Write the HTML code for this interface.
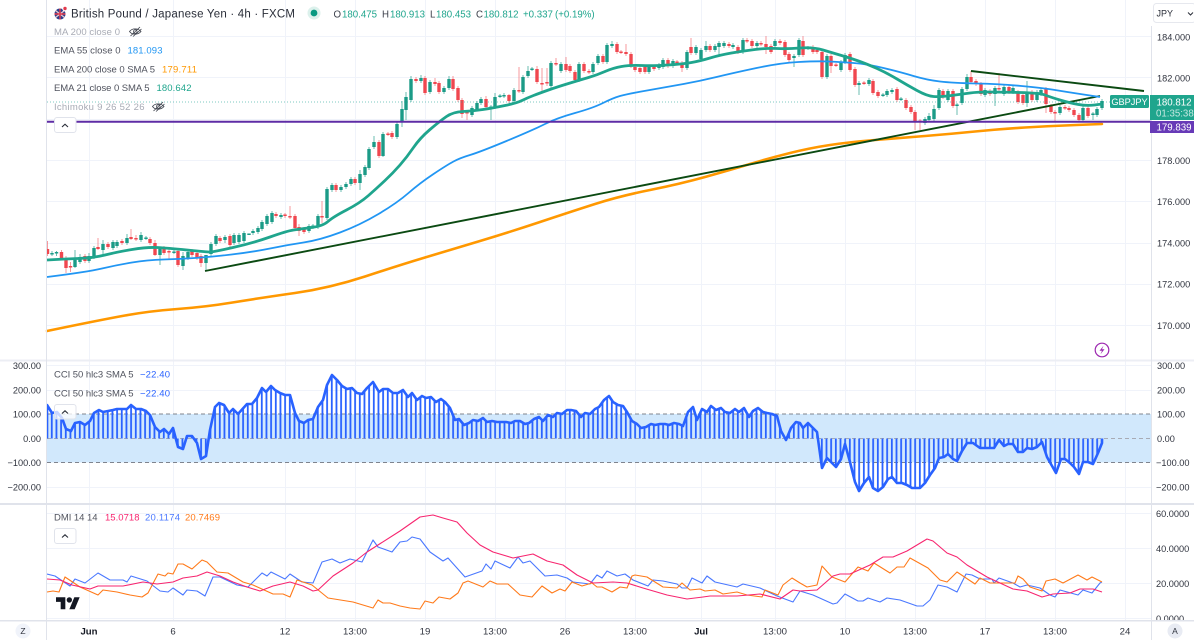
<!DOCTYPE html>
<html><head><meta charset="utf-8"><title>GBPJPY</title>
<style>
html,body{margin:0;padding:0;background:#fff;width:1194px;height:640px;overflow:hidden}
svg{display:block;filter:blur(.3px)}
text{font-family:"Liberation Sans",sans-serif}
.ax{font-size:9.2px;fill:#30343f}
.lg{font-size:9.5px;fill:#50535e}
.ft{font-size:9.5px;fill:#a8abb5}
.tm{font-size:9.6px;fill:#30343f;text-anchor:middle}
.v{font-size:9.7px;fill:#1fa58d}
.o{font-size:9.7px;fill:#3a3e49}
</style></head><body>
<svg width="1194" height="640" viewBox="0 0 1194 640" xmlns="http://www.w3.org/2000/svg">
<defs>
<pattern id="h" x="46.2" y="0" width="4.667" height="20" patternUnits="userSpaceOnUse"><rect width="1.8" height="20" fill="#2962ff"/></pattern>
<clipPath id="pl"><rect x="47" y="0" width="1104" height="620"/></clipPath>
</defs>
<rect width="1194" height="640" fill="#fff"/>
<!-- grid -->
<path stroke="#f0f3fa" fill="none" d="M89.5 0V620M173.5 0V620M285.5 0V620M355.5 0V620M425.5 0V620M495.5 0V620M565.5 0V620M635.5 0V620M701.5 0V620M775.5 0V620M845.5 0V620M915.5 0V620M985.5 0V620M1055.5 0V620M1125.5 0V620"/>
<path stroke="#f0f3fa" fill="none" d="M47 36.5H1151M47 77.5H1151M47 119.5H1151M47 160.5H1151M47 201.5H1151M47 243.5H1151M47 284.5H1151M47 325.5H1151M47 365.5H1151M47 390.5H1151M47 487.5H1151M47 513.5H1151M47 548.5H1151M47 583.5H1151M47 618.5H1151"/>
<!-- CCI band -->
<rect x="47" y="414" width="1104" height="48.5" fill="#d1e8fc"/>
<path stroke="#80848e" stroke-dasharray="4 3" fill="none" d="M47 414H1151M47 462.5H1151"/>
<path stroke="#a8abb5" stroke-dasharray="4 3" fill="none" d="M47 438.5H1151"/>
<!-- Candle wicks -->
<g clip-path="url(#pl)" fill="none">
<path stroke="#1b9b87" stroke-width="1" opacity=".65" d="M52 251V256M56.5 251V256M75 250V268M80 254V264M89 253V263M94 246V259M103 240V254M113 240V250M117 240V248M127 234V245M141 232V242M146 236V240M160 249V265M174 250V254M183 252V270M188 250V260M206 255V270M211 242V256M216 234V246M225 235V243M234 233V245M239 233V244M244 231V243M253 229V235M258 226V234M262 220V231M267 214V226M272 211V224M281 213V219M309 224V233M313 224V229M318 214V229M327 187V220M332 183V192M341 185V192M346 182V189M351 177V186M360 170V190M365 165V177M369 147V170M374 136V149M383 132V157M397 122V139M402 101V127M406 92V120M411 76V102M421 75V83M430 80V94M444 86V94M449 76V90M472 106V117M477 101V111M481 97V105M491 105V120M495 93V109M500 94V98M504 93V98M514 88V103M523 75V94M528 66V78M532 67V71M551 61V88M561 62V73M579 62V82M593 62V74M598 54V65M607 43V64M612 41V48M649 65V74M659 63V70M663 58V69M673 59V68M687 50V70M696 45V55M701 48V61M706 41V52M715 44V52M719 41V55M724 41V48M733 43V49M743 38V54M757 41V48M775 39V48M794 54V67M799 38V57M808 46V50M827 54V79M841 60V72M845 53V64M859 81V95M869 78V86M883 93V97M887 89V97M892 88V94M901 97V101M925 117V125M929 113V122M934 105V121M939 88V110M948 89V102M957 103V115M962 87V105M967 74V91M985 88V97M995 86V106M1004 85V96M1013 86V94M1027 81V107M1037 90V102M1041 88V96M1060 105V115M1083 106V122M1093 112V120M1097 107V117M1102 99V110"/>
<path stroke="#f0474f" stroke-width="1" opacity=".55" d="M47.5 241V256M61.5 250V260M66 256V273M70.5 262V272M85 254V263M98 238V250M108 242V249M122 239V245M131 229V240M136 235V241M150 237V245M155 240V256M164 246V255M169 249V259M178 249V267M192 249V257M197 251V260M201 254V267M220 236V243M230 234V247M276 212V218M285 213V218M290 206V219M295 214V230M299 224V236M304 227V234M322 201V223M336 183V192M355 177V185M379 140V158M388 132V136M392 131V139M416 77V83M425 76V95M435 78V86M439 81V94M453 76V91M458 86V102M462 98V118M467 110V120M486 96V109M509 94V103M519 67V93M537 66V84M542 68V93M547 68V86M556 58V66M566 57V72M570 64V73M575 70V83M584 62V73M589 69V74M603 54V64M617 42V54M621 50V54M626 44V56M631 52V68M635 65V72M640 66V74M645 65V74M654 65V71M668 58V68M677 60V64M682 61V72M691 38V55M710 44V52M729 42V48M738 45V54M747 38V43M752 39V48M761 41V46M766 36V54M771 44V54M780 39V45M785 40V57M789 52V62M803 36V57M813 45V54M817 48V54M822 50V79M831 54V73M836 63V67M850 52V72M855 67V87M864 81V85M873 79V95M878 90V98M897 87V102M906 98V110M911 105V114M915 110V130M920 119V130M943 89V99M953 89V108M971 71V84M976 79V86M981 82V96M990 89V96M999 73V91M1009 85V94M1018 90V104M1023 93V105M1032 90V102M1046 87V113M1051 104V114M1055 110V121M1065 105V110M1069 106V112M1074 108V117M1079 113V122M1088 106V118"/>
<!-- Bodies -->
<path stroke="#1b9b87" stroke-width="3.4" d="M52 253V254.5M56.5 252V253.5M75 260V267M80 257V262M89 256V261M94 248V257M103 244V250M113 242V248M117 242V246M127 238V243M141 235V240M146 237.5V239M160 249V255M174 251.5V253M183 256V266M188 252V258M206 255V263M211 244V254M216 236V244M225 237V240M234 235V243M239 235V242M244 233V241M249 233.5V235M253 231V233M258 228V232M262 222V229M267 216V224M272 213V222M281 215V217M309 226V231M313 225.5V227M318 216V227M327 189V218M332 185V190M341 187V190M346 184V187M351 179V184M360 174V183M365 167V175M369 149V168M374 142V147M383 134V156M397 124V137M402 109V122M406 97V110M411 79V100M421 78V81M430 82V92M444 88V92M449 79V88M472 108V115M477 103V109M481 99V103M491 106.5V108M495 97V107M500 95.5V97M504 95V96.5M514 90V101M523 77V92M528 71V76M532 68.5V70M551 63V86M561 64V71M579 64V80M593 64V72M598 56V63M607 45V62M612 44V46M649 67V72M659 65V68M663 60V67M673 61V66M687 52V68M696 47V53M701 50V59M706 46V50M715 46V50M719 43V47M724 43V46M733 45V47M743 40V52M757 43V46M775 41V46M794 56V58M799 40V55M808 47.5V49M827 56V77M841 62V70M845 55V62M859 83V85M869 80V84M883 94.5V96M887 91V95M892 90V92M901 98.5V100M925 119V123M929 116V120M934 109V119M939 90V108M948 91V100M957 104.5V106M962 89V103M967 77V89M985 90V95M995 88V94M1004 87V94M1013 88V92M1027 92V103M1037 92V100M1041 90V94M1060 107V113M1083 108V120M1093 113.5V115M1097 109V115M1102 101V108"/>
<path stroke="#f0474f" stroke-width="3.4" d="M47.5 249V254M61.5 252V259M66 258V268M70.5 266V267.5M85 256V261M98 247V249M108 244V247M122 241V243M131 237V239M136 238V239.5M150 239V243M155 243V255M164 248V253M169 251V252.5M178 251V265M192 251V255M197 253V258M201 256V263M220 238V241M230 236V245M276 214V216M285 214.5V216M290 216V217.5M295 216V228M299 227V231M304 229V232M322 216V217.5M336 185V190M355 179V183M379 142V156M388 133.5V135M392 133V137M416 79V81M425 78V93M435 82V84M439 83V92M453 79V89M458 88V100M462 100V114M467 112V113.5M486 99V107M509 95V101M519 90V91.5M537 69V82M542 83V84.5M547 82V83.5M556 63V64.5M566 64V70M570 66V71M575 72V80M584 64V71M589 71V72.5M603 56V62M617 44V52M621 51.5V53M626 52V54M631 54V66M635 67V70M640 68V72M645 67V72M654 67V69M668 60V66M677 61.5V63M682 63V68M691 47V53M710 46V50M729 44V46M738 47V52M747 40V41.5M752 41V46M761 43V44.5M766 44V47M771 46V52M780 41V43M785 42V55M789 54V60M803 41V55M813 47V52M817 50V52M822 52V77M831 56V66M836 64.5V66M850 54V70M855 69V85M864 82.5V84M873 81V93M878 92V96M897 89V100M906 100V108M911 107V112M915 112V121M920 120.5V122M943 91V97M953 91V106M971 77V82M976 81V84M981 84V94M990 91V94M999 88V89.5M1009 87V92M1018 92V102M1023 95V103M1032 92V100M1046 89V104M1051 106V112M1055 112V113.5M1065 107V108.5M1069 108V110M1074 110V115M1079 115V120M1088 108V116"/>
</g>
<!-- last price dotted -->
<path stroke="#26a69a" stroke-dasharray="1 2" opacity=".6" d="M47 102H1151" fill="none"/>
<!-- Trend lines / EMAs -->
<path fill="none" stroke="#ff9800" stroke-width="2.6" stroke-linecap="round" d="M47 331Q100 320 125 315.5Q150 311 177.5 309Q205 307 232.5 302.5Q260 298 295 293Q330 288 365 276.5Q400 265 425 257.5Q450 250 480 241Q510 232 540 222Q570 212 595 204Q620 196 650 190Q680 184 705 177Q730 170 750 164Q770 158 790 153Q810 148 830 145Q850 142 875 140Q900 138 925 136Q950 134 975 131.5Q1000 129 1025 127.5Q1050 126 1076 125L1102 124"/>
<path fill="none" stroke="#0b4a12" stroke-width="1.9" d="M205 271L1100 96M971 71L1144 91"/>
<path fill="none" stroke="#2196f3" stroke-width="1.8" d="M47 277Q87 272 102 268.5Q117 265 132 262.5Q147 260 163.5 259.5Q180 259 195 258Q210 257 231.5 254.5Q253 252 270 248.5Q287 245 303.5 242.5Q320 240 340 232.5Q360 225 378.5 214Q397 203 408.5 193Q420 183 433.5 174Q447 165 453.5 161.5Q460 158 470 155Q480 152 506.5 141Q533 130 545 124Q557 118 575 113Q593 108 603 103Q613 98 620 96Q627 94 647 90.5Q667 87 683.5 84Q700 81 716.5 77Q733 73 756.5 68Q780 63 798.5 62Q817 61 828.5 61.5Q840 62 853.5 63Q867 64 883.5 68Q900 72 913.5 76Q927 80 940 81.5Q953 83 976.5 83.5Q1000 84 1021.5 86Q1043 88 1055 90Q1067 92 1083.5 94.5L1100 97"/>
<path fill="none" stroke="#1fa58d" stroke-width="2.8" d="M47 260Q63 259 78 258.5Q93 258 105 255Q117 252 132 249.5Q147 247 157 247.5Q167 248 187 250Q207 252 210 252Q213 252 233 247.5Q253 243 270 237Q287 231 293.5 230Q300 229 311.5 227.5Q323 226 328 221.5Q333 217 346.5 210Q360 203 368.5 195.5Q377 188 385 180.5Q393 173 400 165Q407 157 413.5 147.5Q420 138 430 129.5Q440 121 446.5 116.5Q453 112 463 111.5Q473 111 483 109.5Q493 108 505 105.5Q517 103 522 100.5Q527 98 533.5 95.5Q540 93 548.5 90Q557 87 568.5 83.5Q580 80 588.5 77.5Q597 75 605 71.5Q613 68 621.5 66.5Q630 65 641.5 65.5Q653 66 668 65Q683 64 691.5 62.5Q700 61 710 58Q720 55 731.5 53Q743 51 755 49.5Q767 48 777 48.5Q787 49 800 48Q813 47 823 50Q833 53 841.5 55.5Q850 58 858.5 61Q867 64 877 68.5Q887 73 897 79Q907 85 917 90.5Q927 96 933.5 96.5Q940 97 951.5 95.5Q963 94 970 93Q977 92 988.5 92Q1000 92 1020 92.5Q1040 93 1045 95Q1050 97 1060 100Q1070 103 1078.5 104.5Q1087 106 1094.5 105L1102 104"/>
<path fill="none" stroke="#5e2ca5" stroke-width="2" d="M47 121.8H1151"/>
<!-- CCI -->
<polyline fill="url(#h)" stroke="#2962ff" stroke-width="2.6" stroke-linejoin="round" clip-path="url(#pl)" points="47,438.5 47,405 52,413 57,412 62,418 66,429 71,431 75,423 80,422 85,425 90,421 94,413 99,410 103,412 108,411 113,410 117,409 122,409 127,409 131,405 136,409 141,409 146,411 150,415 155,427 160,432 164,429 169,434 173,428 178,447 183,449 187,436 192,436 197,443 201,459 206,456 210,430 215,407 219,403 224,405 229,413 233,409 238,414 247,404 252,404 257,398 262,388 266,392 271,386 275,390 280,393 285,395 290,395 295,413 299,421 304,423 308,420 313,419 318,407 323,400 327,385 332,375 337,380 342,386 347,389 352,388 357,393 362,394 367,388 373,382 379,392 383,389 388,389 393,393 398,393 403,390 408,397 412,393 417,400 422,396 426,398 431,397 436,402 441,399 445,402 450,408 455,420 459,419 464,425 469,423 473,420 478,421 483,418 487,422 492,421 497,422 501,422 506,422 511,423 515,421 520,421 525,424 529,423 534,419 539,417 543,421 548,415 553,417 557,413 562,414 567,410 571,410 576,411 581,417 585,413 590,414 595,409 599,407 604,400 609,396 613,402 618,405 623,406 627,412 632,421 637,424 641,428 646,427 651,424 655,425 660,424 665,424 669,425 674,423 679,424 683,426 688,412 693,407 697,420 702,409 707,412 711,406 716,410 721,408 725,412 730,413 735,409 739,412 744,408 749,417 753,411 758,408 763,412 767,413 772,414 777,416 781,431 786,440 791,428 796,422 800,423 803,428 808,423 813,428 817,432 822,468 827,458 832,463 836,467 841,459 845,444 850,462 855,482 859,491 864,483 869,477 873,488 878,491 883,487 888,479 892,477 897,483 902,483 907,485 912,488 920,488 925,483 930,475 935,468 939,458 944,457 948,454 953,459 957,461 962,451 967,443 973,443 980,448 987,448 994,448 999,440 1004,446 1008,444 1013,444 1018,452 1023,452 1027,448 1032,449 1037,447 1042,442 1047,457 1056,473 1061,459 1065,459 1070,463 1074,467 1079,474 1083,462 1088,462 1093,464 1098,453 1102,443 1102,438.5"/>
<!-- DMI -->
<g fill="none" stroke-width="1.1" stroke-linejoin="round" clip-path="url(#pl)">
<polyline stroke="#4a78ff" points="47,574 55,576 70,586 75,579 85,583 98,573 110,580 123,580 127,582 131,576 147,581 160,591 168,592 173,588 183,595 187,590 197,591 205,596 213,577 220,577 237,585 248,587 262,573 267,576 271,572 285,579 290,574 302,582 313,583 322,562 332,559 340,563 350,559 362,562 373,540 378,547 392,552 400,542 407,541 412,537 420,539 430,552 443,561 448,558 465,577 482,571 486,564 491,569 495,561 510,568 518,557 523,563 530,561 545,576 557,575 567,578 573,582 590,584 597,575 602,578 607,571 617,576 625,574 633,580 648,586 653,580 663,581 677,584 682,588 687,588 692,578 702,583 707,576 715,582 737,587 743,584 760,588 777,596 793,602 800,591 813,595 833,604 837,603 845,594 858,601 863,601 868,598 880,602 887,598 900,600 917,606 923,606 930,600 938,585 947,587 957,592 966,574 972,575 980,579 992,579 994,583 999,578 1013,583 1020,587 1027,585 1040,588 1050,595 1055,597 1060,590 1078,595 1083,590 1092,593 1100,583 1102,582"/>
<polyline stroke="#ff7a1a" points="47,592 53,591 59,592 65,577 80,587 98,595 103,590 117,592 130,595 142,597 148,593 158,574 165,576 168,573 173,574 178,564 183,564 192,569 202,560 207,562 217,572 228,573 243,582 253,585 273,594 283,594 290,597 297,580 312,585 328,598 353,602 373,608 378,600 383,603 390,603 400,606 410,608 420,609 425,601 433,603 439,597 450,599 458,593 463,583 468,581 483,587 490,581 497,584 508,584 520,595 532,597 542,586 552,593 560,589 565,591 572,582 582,586 592,583 597,587 602,587 612,592 620,587 627,588 632,576 635,575 647,577 663,587 677,588 682,583 690,590 700,589 705,591 715,590 723,594 737,592 747,595 762,597 765,590 778,595 783,585 792,578 800,583 807,587 817,585 822,566 832,577 845,582 858,567 868,571 874,563 890,573 897,567 904,567 910,558 928,568 940,580 947,582 957,572 975,584 980,578 990,583 1015,583 1018,576 1023,579 1030,587 1042,591 1046,581 1055,579 1063,583 1078,575 1087,580 1092,577 1102,582"/>
<polyline stroke="#f7256f" points="47,579 60,580 72,585 90,589 98,586 123,586 143,582 157,584 173,582 183,578 197,576 207,572 220,576 233,582 247,587 260,591 273,586 290,582 303,586 313,591 318,590 333,576 353,563 367,552 400,531 420,517 433,515 443,518 457,522 467,533 480,545 493,552 513,558 533,554 547,561 563,565 577,575 593,583 613,582 627,583 643,588 667,595 687,599 703,597 710,596 737,596 760,594 780,599 793,590 800,591 817,590 833,576 840,574 850,574 870,565 883,557 893,557 907,551 927,539 933,541 947,553 957,557 967,565 987,577 1000,583 1013,589 1027,591 1042,597 1053,594 1070,593 1080,589 1093,589 1102,592"/>
</g>
<!-- pane separators -->
<rect x="0" y="359.5" width="1194" height="2" fill="#eceef4"/>
<rect x="0" y="503" width="1194" height="2" fill="#e0e3eb"/>
<rect x="0" y="620" width="1194" height="1.5" fill="#e0e3eb"/>
<path stroke="#e0e3eb" stroke-width="1" fill="none" d="M46.5 0V640M1151.5 26V640"/>
<!-- Legend -->
<circle cx="60" cy="14" r="5.5" fill="#2b3f8c"/>
<path stroke="#e8c6cc" stroke-width="1.4" d="M55.5 10.5L64.5 17.5M64.5 10.5L55.5 17.5" fill="none"/>
<path stroke="#e23a4c" stroke-width="1.4" d="M60 8.5V19.5M54.5 14H65.5" fill="none"/>
<circle cx="65" cy="8.5" r="2.8" fill="#fff"/>
<circle cx="65" cy="8.5" r="1.7" fill="#e23a4c"/>
<text x="71" y="17.5" font-size="11.5" fill="#2a2e39" textLength="224">British Pound / Japanese Yen · 4h · FXCM</text>
<circle cx="314" cy="13" r="6.5" fill="#dcf1ec"/>
<circle cx="314" cy="13" r="3.4" fill="#089981"/>
<g>
<text x="333.5" y="17.3" class="o">O</text><text x="342" y="17.3" class="v">180.475</text>
<text x="382" y="17.3" class="o">H</text><text x="390" y="17.3" class="v">180.913</text>
<text x="430" y="17.3" class="o">L</text><text x="436" y="17.3" class="v">180.453</text>
<text x="476" y="17.3" class="o">C</text><text x="483.5" y="17.3" class="v">180.812</text>
<text x="523" y="17.3" class="v">+0.337</text><text x="555" y="17.3" class="v">(+0.19%)</text>
</g>
<text x="54" y="35" class="ft" textLength="66">MA 200 close 0</text>
<text x="54" y="53.5" class="lg" textLength="66.5">EMA 55 close 0</text>
<text x="127.5" y="53.5" class="lg" style="fill:#2196f3" textLength="35">181.093</text>
<text x="54" y="72.5" class="lg" textLength="101">EMA 200 close 0 SMA 5</text>
<text x="162" y="72.5" class="lg" style="fill:#ff9800" textLength="35">179.711</text>
<text x="54" y="91" class="lg" textLength="95.5">EMA 21 close 0 SMA 5</text>
<text x="156.5" y="91" class="lg" style="fill:#1fa58d" textLength="35">180.642</text>
<text x="54" y="110" class="ft" textLength="90.5">Ichimoku 9 26 52 26</text>
<g fill="none" stroke="#3a3e49" stroke-width=".8">
<path d="M129.5 31.5C132 28 138 28 141 31.5C138 35 132 35 129.5 31.5Z"/><circle cx="135.3" cy="31.5" r="1.8"/><path d="M130.5 36L140 27M133 36.5L141.5 29"/>
<path d="M152.5 106.5C155 103 161 103 164 106.5C161 110 155 110 152.5 106.5Z"/><circle cx="158.3" cy="106.5" r="1.8"/><path d="M153.5 111L163 102M156 111.5L164.5 104"/>
</g>
<rect x="54.5" y="117.5" width="21.5" height="15" rx="2.5" fill="#fff" stroke="#e0e3eb"/>
<path d="M62 127L65 124.2L68 127" fill="none" stroke="#2a2e39" stroke-width="1.1"/>
<text x="54" y="377.3" class="lg" textLength="79.5">CCI 50 hlc3 SMA 5</text>
<text x="140" y="377.3" class="lg" style="fill:#2962ff" textLength="30">−22.40</text>
<text x="54" y="396.3" class="lg" textLength="79.5">CCI 50 hlc3 SMA 5</text>
<text x="140" y="396.3" class="lg" style="fill:#2962ff" textLength="30">−22.40</text>
<rect x="54.5" y="404.5" width="21.5" height="14.5" rx="2.5" fill="#fff" fill-opacity=".75" stroke="#e0e3eb"/>
<path d="M62 413.5L65 410.8L68 413.5" fill="none" stroke="#2a2e39" stroke-width="1.1"/>
<text x="54" y="520.5" class="lg" textLength="43.5">DMI 14 14</text>
<text x="105" y="520.5" class="lg" style="fill:#f7256f" textLength="34.5">15.0718</text>
<text x="145" y="520.5" class="lg" style="fill:#4a78ff" textLength="35">20.1174</text>
<text x="185" y="520.5" class="lg" style="fill:#ff7a1a" textLength="35">20.7469</text>
<rect x="54.5" y="528.5" width="21.5" height="15" rx="2.5" fill="#fff" stroke="#e0e3eb"/>
<path d="M62 537.5L65 534.8L68 537.5" fill="none" stroke="#2a2e39" stroke-width="1.1"/>
<!-- TV logo -->
<g transform="translate(56,594.6) scale(.667)" fill="#131722"><path d="M14 22H7V11H0V4h14v18zM28 22h-8l7.5-18h8L28 22z"/><circle cx="20" cy="8" r="4"/></g>
<!-- Lightning -->
<circle cx="1102" cy="350" r="6.8" fill="#fff" stroke="#9c27b0" stroke-width="1.2"/>
<path d="M1103.5 345.8L1099.5 350.8H1102L1100.5 354.2L1104.5 349.2H1102Z" fill="#9c27b0"/>
<!-- Left CCI axis -->
<text x="41" y="368.8" class="ax" text-anchor="end">300.00</text>
<text x="41" y="393.3" class="ax" text-anchor="end">200.00</text>
<text x="41" y="417.3" class="ax" text-anchor="end">100.00</text>
<text x="41" y="441.8" class="ax" text-anchor="end">0.00</text>
<text x="41" y="465.8" class="ax" text-anchor="end">−100.00</text>
<text x="41" y="490.3" class="ax" text-anchor="end">−200.00</text>
<!-- Right axis -->
<text x="1157" y="40.3" class="ax">184.000</text>
<text x="1157" y="81.3" class="ax">182.000</text>
<text x="1157" y="164" class="ax">178.000</text>
<text x="1157" y="205" class="ax">176.000</text>
<text x="1157" y="246.5" class="ax">174.000</text>
<text x="1157" y="287.5" class="ax">172.000</text>
<text x="1157" y="329" class="ax">170.000</text>
<text x="1157" y="368.8" class="ax">300.00</text>
<text x="1157" y="393.3" class="ax">200.00</text>
<text x="1157" y="417.3" class="ax">100.00</text>
<text x="1157" y="441.8" class="ax">0.00</text>
<text x="1156" y="465.8" class="ax">−100.00</text>
<text x="1156" y="490.3" class="ax">−200.00</text>
<text x="1156" y="516.8" class="ax">60.0000</text>
<text x="1156" y="552" class="ax">40.0000</text>
<text x="1156" y="587" class="ax">20.0000</text>
<text x="1156" y="622" class="ax">0.0000</text>
<rect x="1152" y="620" width="42" height="20" fill="#fff"/>
<rect x="1152" y="620" width="42" height="1.5" fill="#e0e3eb"/>
<!-- JPY -->
<rect x="1153.5" y="3.5" width="42" height="19" rx="3" fill="#fff" stroke="#e6e8ee"/>
<text x="1156.5" y="16.5" font-size="9" fill="#2a2e39">JPY</text>
<path d="M1188 12.5L1190.5 15L1193 12.5" fill="none" stroke="#2a2e39"/>
<!-- labels -->
<rect x="1110" y="95" width="39" height="13" rx="1.5" fill="#1fa58d"/>
<text x="1129.5" y="105" font-size="9.2" fill="#fff" text-anchor="middle">GBPJPY</text>
<rect x="1150" y="95" width="44" height="25" fill="#1fa58d"/>
<text x="1156.5" y="105.5" font-size="9.7" fill="#fff">180.812</text>
<text x="1156" y="116.5" font-size="9.7" fill="#c5e8e1">01:35:38</text>
<rect x="1150" y="121" width="44" height="12" fill="#673ab7"/>
<text x="1156.5" y="130.5" font-size="9.7" fill="#fff">179.839</text>
<!-- time axis -->
<text x="89" y="634.5" class="tm" style="fill:#131722;font-weight:bold">Jun</text>
<text x="173" y="634.5" class="tm">6</text>
<text x="285" y="634.5" class="tm">12</text>
<text x="355" y="634.5" class="tm">13:00</text>
<text x="425" y="634.5" class="tm">19</text>
<text x="495" y="634.5" class="tm">13:00</text>
<text x="565" y="634.5" class="tm">26</text>
<text x="635" y="634.5" class="tm">13:00</text>
<text x="701" y="634.5" class="tm" style="fill:#131722;font-weight:bold">Jul</text>
<text x="775" y="634.5" class="tm">13:00</text>
<text x="845" y="634.5" class="tm">10</text>
<text x="915" y="634.5" class="tm">13:00</text>
<text x="985" y="634.5" class="tm">17</text>
<text x="1055" y="634.5" class="tm">13:00</text>
<text x="1125" y="634.5" class="tm">24</text>
<circle cx="23" cy="631" r="7.5" fill="#f0f3fa"/>
<text x="23" y="634.2" class="tm" style="font-size:8.5px">Z</text>
<circle cx="1175" cy="631" r="7.5" fill="#e8ebf3"/>
<text x="1175" y="634.2" class="tm" style="font-size:8.5px">A</text>
</svg>
</body></html>
